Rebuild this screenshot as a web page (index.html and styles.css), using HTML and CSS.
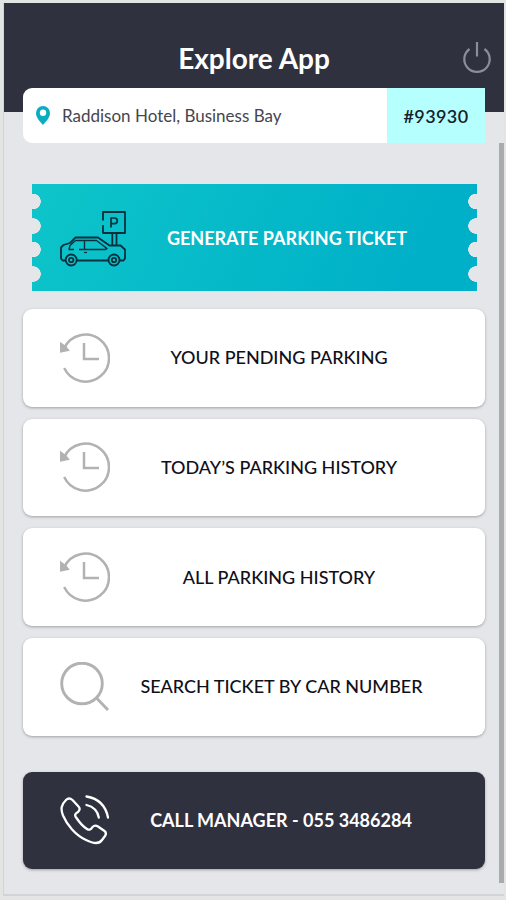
FILE: index.html
```html
<!DOCTYPE html>
<html lang="en">
<head>
    <meta charset="UTF-8">
    <meta name="viewport" content="width=device-width, initial-scale=1.0">
    <title>Explore App</title>
    <link rel="stylesheet" href="styles.css">
</head>
<body>
    <div class="screen">
        <header class="header">
            <h1>Explore App</h1>
            <svg class="power" viewBox="0 0 30 32" fill="none" stroke="#8b8d97" stroke-width="2.2">
                <path d="M7.500 7A12.700 12.700 0 1 0 22.500 7M15 0v14.500"/>
            </svg>
        </header>

        <main class="content">
            <div class="location">
                <svg class="pin" viewBox="0 0 14 19">
                    <path fill="#08adc2" fill-rule="evenodd" d="M7 0a7 7 0 0 0-7 7c0 4.500 3.500 8 7 12 3.500-4 7-7.500 7-12a7 7 0 0 0-7-7zm0 3.600a3.200 3.200 0 1 1 0 6.400 3.200 3.200 0 0 1 0-6.400z"/>
                </svg>
                <span class="place">Raddison Hotel, Business Bay</span>
                <span class="code">#93930</span>
            </div>

            <a class="ticket">
                <svg class="car" viewBox="0 0 68 58" fill="none" stroke="#07303e" stroke-width="1.8" stroke-linejoin="round">
                    <path d="M43 11.500V3h22v21H43v-8M52.300 24v12.500M56.500 24v13"/>
                    <path d="M51 18.500V9h3.500a2.800 2.800 0 0 1 0 5.600H51" stroke-width="1.700"/>
                    <path d="M5.500 51.500H2.500L1 49.500V38.500l2.500-2.500 6.500-2 5.500-5.500H38l11.500 8H60.500l4.500 4V49.500l-1.500 2H59.500M16.500 51.500H48.500"/>
                    <path d="M14 40.500H9l1-4 5.500-5H36.500l10.500 8-2 1H19M24.500 31.500V40.500" stroke-width="1.400"/>
                    <path d="M24 43.500h3" stroke-width="1.200"/>
                    <circle cx="11.200" cy="51" r="5.500"/>
                    <circle cx="11.200" cy="51" r="2.200"/>
                    <circle cx="54" cy="51" r="5.500"/>
                    <circle cx="54" cy="51" r="2.200"/>
                </svg>
                <span class="label">GENERATE PARKING TICKET</span>
            </a>

            <nav class="menu">
                <a class="card">
                    <svg class="icon" viewBox="0 0 50 50" fill="none" stroke="#b2b2b2" stroke-width="2.500">
                        <path d="M4.200 35A23.500 23.500 0 1 0 4.300 15M24 10v16H39"/>
                        <path d="M.8 10.500v8l7.200-1.500-2.500-3z" fill="#b2b2b2" stroke-width="2"/>
                    </svg>
                    <span class="label">YOUR PENDING PARKING</span>
                </a>
                <a class="card">
                    <svg class="icon" viewBox="0 0 50 50" fill="none" stroke="#b2b2b2" stroke-width="2.500">
                        <path d="M4.200 35A23.500 23.500 0 1 0 4.300 15M24 10v16H39"/>
                        <path d="M.8 10.500v8l7.200-1.500-2.500-3z" fill="#b2b2b2" stroke-width="2"/>
                    </svg>
                    <span class="label">TODAY’S PARKING HISTORY</span>
                </a>
                <a class="card">
                    <svg class="icon" viewBox="0 0 50 50" fill="none" stroke="#b2b2b2" stroke-width="2.500">
                        <path d="M4.200 35A23.500 23.500 0 1 0 4.300 15M24 10v16H39"/>
                        <path d="M.8 10.500v8l7.200-1.500-2.500-3z" fill="#b2b2b2" stroke-width="2"/>
                    </svg>
                    <span class="label">ALL PARKING HISTORY</span>
                </a>
                <a class="card search">
                    <svg class="icon" viewBox="0 0 50 50" fill="none" stroke="#b2b2b2" stroke-width="2.900">
                        <circle cx="22" cy="21.500" r="20.300"/>
                        <path d="M36.500 36l11.500 12"/>
                    </svg>
                    <span class="label">SEARCH TICKET BY CAR NUMBER</span>
                </a>
            </nav>

            <a class="card call">
                <svg class="icon" viewBox="0 0 50 50" fill="none" stroke="#fff" stroke-width="2.300" stroke-linecap="round" stroke-linejoin="round">
                    <path d="M6 5Q9 2 12.500 5L18.500 11.500Q21 14 18 17C14.500 19 14.500 20.500 16.500 23C19.500 27.500 23 31.500 27 34C29.500 35.500 31 34.500 32.500 32Q35 29.500 38 31.500L44.500 36Q47 38 45 41L42 45C39 49.500 33 48.500 26 45C15.500 40 7 30 3 20.500C.5 14 1 10 6 5Z"/>
                    <path d="M26.500 10Q37 12.500 38.800 22.500M26.500 1.500Q44.500 4.500 48 22.500"/>
                </svg>
                <span class="label">CALL MANAGER - 055 3486284</span>
            </a>
        </main>
        <div class="scrollbar"></div>
    </div>
</body>
</html>
```

FILE: styles.css
```css
* {
    box-sizing: border-box;
}
body {
    margin: 0;
    height: 900px;
    padding: 3px 2px 4px 3px;
    background-color: #e3e5e3;
    font-family: Lato, sans-serif;
    overflow: hidden;
}
.screen {
    position: relative;
    height: 893px;
    border: solid #d2d3d5;
    border-width: 0 0 2px 1px;
    background-color: #e5e6ea;
}
.header {
    display: flex;
    align-items: center;
    height: 109px;
    padding: 1px 12px 0 42px;
    background-color: #2f313f;
}
.header h1 {
    flex: 1;
    margin: 0;
    color: #fff;
    font-size: 28px;
    font-weight: bold;
    line-height: 32px;
    text-align: center;
}
.power {
    width: 30px;
    height: 32px;
}
.content {
    position: relative;
    margin-top: -24px;
    padding: 0 19px;
}
.location {
    display: flex;
    align-items: center;
    height: 55px;
    padding-left: 13px;
    overflow: hidden;
    border-radius: 9px 0 0 9px;
    background-color: #fff;
}
.pin {
    width: 14px;
    height: 19px;
}
.place {
    flex: 1;
    margin-left: 12px;
    color: #45464e;
    font-size: 17px;
}
.code {
    width: 98px;
    background-color: #b5fffe;
    color: #17212d;
    font-size: 18px;
    font-weight: 600;
    letter-spacing: 0.4px;
    line-height: 56px;
    text-align: center;
}
.ticket {
    display: flex;
    align-items: center;
    height: 107px;
    margin: 41px 8px 18px 9px;
    padding-left: 28px;
    background:
        radial-gradient(circle at 1px 17.500px, #e5e6ea 7.500px, transparent 8px),
        radial-gradient(circle at 1px 42px, #e5e6ea 7.500px, transparent 8px),
        radial-gradient(circle at 1px 65.500px, #e5e6ea 7.500px, transparent 8px),
        radial-gradient(circle at 1px 90px, #e5e6ea 7.500px, transparent 8px),
        radial-gradient(circle at 444px 17.500px, #e5e6ea 7.500px, transparent 8px),
        radial-gradient(circle at 444px 42px, #e5e6ea 7.500px, transparent 8px),
        radial-gradient(circle at 444px 65.500px, #e5e6ea 7.500px, transparent 8px),
        radial-gradient(circle at 444px 90px, #e5e6ea 7.500px, transparent 8px),
        linear-gradient(115deg, #0dc5ca, #00b0c8 85%);
}
.car {
    width: 68px;
    height: 58px;
}
.label {
    flex: 1;
    padding-bottom: 1px;
    font-size: 18px;
    font-weight: 500;
    text-align: center;
    white-space: nowrap;
}
.ticket .label {
    padding: 0 31px 0 0;
    color: #fff;
    font-weight: bold;
}
.menu {
    display: grid;
    gap: 12.200px;
}
.card {
    display: flex;
    align-items: center;
    height: 97.500px;
    padding: 0 37px;
    border-radius: 9px;
    background-color: #fff;
    box-shadow: 0 1px 3px rgba(0, 0, 0, 0.3);
    color: #10101a;
}
.search {
    padding-right: 32px;
}
.icon {
    width: 50px;
    height: 50px;
}
.call {
    height: 97px;
    margin-top: 36px;
    padding-right: 33px;
    background-color: #2f313f;
    color: #fff;
}
.call .label {
    padding: 0;
    font-weight: bold;
}
.scrollbar {
    position: absolute;
    top: 140px;
    right: 0;
    width: 5px;
    height: 740px;
    background-color: #aaabad;
}
```
